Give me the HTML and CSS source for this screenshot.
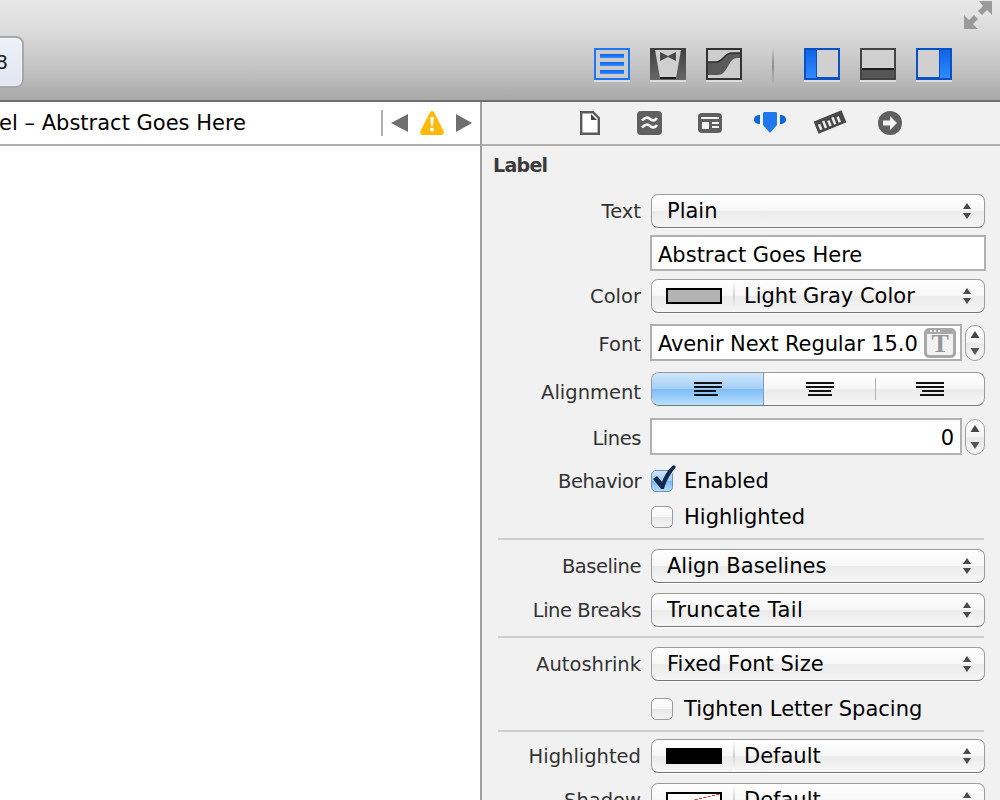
FILE: index.html
```html
<!DOCTYPE html>
<html lang="en">
<head>
<meta charset="utf-8">
<title>Label inspector</title>
<link rel="stylesheet" href="styles.css">
</head>
<body>
<svg class="defs" width="0" height="0" aria-hidden="true">
  <defs>
    <linearGradient id="blueFill" x1="0" y1="0" x2="0" y2="1"><stop offset="0" stop-color="#0f63e6"/><stop offset="1" stop-color="#2f8bff"/></linearGradient>
    <linearGradient id="darkFill" x1="0" y1="0" x2="0" y2="1"><stop offset="0" stop-color="#3f3f3f"/><stop offset="1" stop-color="#666"/></linearGradient>
    <symbol id="updown" viewBox="0 0 10 16"><path d="M5 0 9 6H1z" fill="#4a4a4a"/><path d="M1 10h8L5 16z" fill="#4a4a4a"/></symbol>
    <symbol id="stepup" viewBox="0 0 10 26"><path d="M5 1 9.500 8H.5z" fill="#444"/><path d="M.5 18h9L5 25z" fill="#555"/></symbol>
  </defs>
</svg>
<div class="app">
  <header class="toolbar">
    <div class="toolbar-top">
      <svg class="fullscreen" width="28" height="28" viewBox="0 0 28 28"><path d="M15 0H28V14L23 9 18 14 14 10 19 5Z" fill="#9a9a9a"/><path d="M0 14 5 19 10 14 14 18 9 23 14 28H0Z" fill="#9a9a9a"/></svg>
    </div>
    <div class="toolbar-main">
      <div class="run-button"><span>8</span></div>
      <div class="tool-group">
        <svg class="tool" width="36" height="34" viewBox="0 0 36 34"><rect y="32" width="36" height="2" fill="#dcdcdc"/><rect x="1" y="1" width="34" height="30" fill="#cbcbcb" stroke="#1b78f2" stroke-width="2"/><rect x="6" y="6" width="24" height="4" fill="url(#blueFill)"/><rect x="6" y="14" width="24" height="4" fill="url(#blueFill)"/><rect x="6" y="22" width="24" height="4" fill="url(#blueFill)"/></svg>
        <svg class="tool" width="36" height="34" viewBox="0 0 36 34"><rect y="32" width="36" height="2" fill="#dcdcdc"/><rect width="36" height="32" fill="url(#darkFill)"/><path d="M5 2H31L26 30H10Z" fill="#cfcfcf"/><path d="M10 4 18 8 26 4V13L18 9 10 13Z" fill="#4a4a4a"/><path d="M10 30H26" stroke="#1d1d1d" stroke-width="2"/></svg>
        <svg class="tool" width="36" height="34" viewBox="0 0 36 34"><rect y="32" width="36" height="2" fill="#dcdcdc"/><rect width="36" height="32" fill="#333"/><rect x="2" y="2" width="32" height="28" fill="#cdcdcd"/><path d="M2 14H10C17 14 18 5 26 5H34V10H31C22 10 22 27 12 27H2Z" fill="#5a5a5a"/><path d="M2 14H10C17 14 18 5 26 5H34" fill="none" stroke="#2c2c2c" stroke-width="1.500"/></svg>
      </div>
      <span class="tool-sep"></span>
      <div class="tool-group">
        <svg class="tool" width="36" height="34" viewBox="0 0 36 34"><rect y="32" width="36" height="2" fill="#dcdcdc"/><rect width="36" height="32" fill="#0b50c4"/><rect x="2" y="2" width="10" height="28" fill="url(#blueFill)"/><rect x="13" y="2" width="21" height="27" fill="#d0d0d0"/></svg>
        <svg class="tool" width="36" height="34" viewBox="0 0 36 34"><rect y="32" width="36" height="2" fill="#dcdcdc"/><rect width="36" height="32" fill="#444"/><rect x="2" y="2" width="32" height="18" fill="#d0d0d0"/><rect x="2" y="20" width="32" height="2" fill="#1c1c1c"/><rect x="2" y="22" width="32" height="8" fill="#555"/></svg>
        <svg class="tool" width="36" height="34" viewBox="0 0 36 34"><rect y="32" width="36" height="2" fill="#dcdcdc"/><rect width="36" height="32" fill="#0b50c4"/><rect x="24" y="2" width="10" height="28" fill="url(#blueFill)"/><rect x="2" y="2" width="21" height="27" fill="#d0d0d0"/></svg>
      </div>
    </div>
  </header>
  <div class="workspace">
    <section class="editor">
      <div class="jumpbar">
        <div class="crumb">Label – Abstract Goes Here</div>
        <span class="jump-sep"></span>
        <svg class="jump-icon" width="17" height="18" viewBox="0 0 17 18"><path d="M17 0V18L0 9Z" fill="#6f6f6f"/></svg>
        <svg class="jump-icon warn" width="24" height="24" viewBox="0 0 24 24"><path d="M12 0C13.500 0 14 1 15 3L23.500 20C24.500 22.500 23.500 24 21 24H3C.5 24-.5 22.500.5 20L9 3C10 1 10.500 0 12 0Z" fill="#ffb908"/><path d="M10.300 6H13.700L13 15H11Z" fill="#fff"/><circle cx="12" cy="18.500" r="1.900" fill="#fff"/></svg>
        <svg class="jump-icon next" width="16" height="18" viewBox="0 0 16 18"><path d="M0 0V18L16 9Z" fill="#6f6f6f"/></svg>
      </div>
    </section>
    <aside class="inspector">
      <nav class="tabs">
        <svg class="tab tab-doc" width="20" height="24" viewBox="0 0 20 24"><path d="M1.200 1.200H13L18.800 7V22.800H1.200Z" fill="#fff" stroke="#5a5a5a" stroke-width="2.400"/><path d="M11 3V9H17Z" fill="#444"/></svg>
        <svg class="tab tab-quick" width="25" height="24" viewBox="0 0 25 24"><rect width="25" height="24" rx="4" fill="#5f5f5f"/><path d="M5 9.500C8 6 11 6 13 8S18 10 20 7M5 16.500C8 13 11 13 13 15S18 17 20 14" fill="none" stroke="#f4f4f4" stroke-width="2.600"/></svg>
        <svg class="tab tab-layout" width="24" height="20" viewBox="0 0 24 20"><rect width="24" height="20" rx="4" fill="#5f5f5f"/><rect x="3" y="4" width="18" height="2" fill="#f4f4f4"/><rect x="4" y="9" width="7" height="7" fill="#f4f4f4"/><rect x="14" y="9" width="7" height="2" fill="#f4f4f4"/><rect x="14" y="13" width="7" height="2" fill="#f4f4f4"/></svg>
        <svg class="tab tab-shield" width="32" height="22" viewBox="0 0 32 22"><path d="M9 1C9 0 10 0 11 0H21C22 0 23 0 23 1V13L16 21 9 13Z" fill="#2078ee"/><path d="M6 3V12C2 12 0 10 0 7.500S2 3 6 3ZM26 3V12C30 12 32 10 32 7.500S30 3 26 3Z" fill="#0f66dc"/></svg>
        <svg class="tab tab-ruler" width="32" height="24" viewBox="0 0 32 24"><g transform="rotate(-22 16 12)"><rect x="1" y="5.500" width="30" height="13" fill="#484848"/><path d="M5 10V16M10 8.500V16M15 10V16M20 8.500V16M25 10V16" stroke="#ececec" stroke-width="2.500"/></g></svg>
        <svg class="tab tab-arrow" width="24" height="24" viewBox="0 0 24 24"><circle cx="12" cy="12" r="12" fill="#5f5f5f"/><path d="M5 9.500H12V5L19 12 12 19V14.500H5Z" fill="#f4f4f4"/></svg>
      </nav>
      <div class="panel">
        <h2 class="panel-title">Label</h2>
        <div class="row row-text">
          <label class="field-label">Text</label>
          <div class="select"><span class="select-value">Plain</span><svg class="updown" width="10" height="16"><use href="#updown"/></svg></div>
        </div>
        <div class="row row-gap7">
          <span class="field-label"></span>
          <div class="textfield textfield-full">Abstract Goes Here</div>
        </div>
        <div class="row row-gap8">
          <label class="field-label">Color</label>
          <div class="select"><span class="swatch swatch-gray"></span><span class="select-rule"></span><span class="select-value select-value-after">Light Gray Color</span><svg class="updown" width="10" height="16"><use href="#updown"/></svg></div>
        </div>
        <div class="row row-gap11">
          <label class="field-label label-lower">Font</label>
          <div class="textfield textfield-step textfield-font">Avenir Next Regular 15.0<span class="font-btn"><span class="font-btn-t">T</span></span></div>
          <div class="stepper"><svg width="10" height="26"><use href="#stepup"/></svg></div>
        </div>
        <div class="row row-gap11">
          <label class="field-label label-low">Alignment</label>
          <div class="segmented">
            <div class="seg seg-on"><svg width="28" height="14" viewBox="0 0 28 14"><path d="M0 0H28V2H0ZM0 4H28V6H0ZM0 8H22V10H0ZM0 12H24V14H0Z" fill="#111"/></svg></div>
            <div class="seg"><svg width="28" height="14" viewBox="0 0 28 14"><path d="M0 0H28V2H0ZM0 4H28V6H0ZM3 8H25V10H3ZM2 12H26V14H2Z" fill="#111"/></svg></div>
            <div class="seg seg-last"><svg width="28" height="14" viewBox="0 0 28 14"><path d="M0 0H28V2H0ZM0 4H28V6H0ZM6 8H28V10H6ZM4 12H28V14H4Z" fill="#111"/></svg></div>
          </div>
        </div>
        <div class="row row-gap12">
          <label class="field-label label-lower label-tight">Lines</label>
          <div class="textfield textfield-step textfield-num">0</div>
          <div class="stepper"><svg width="10" height="26"><use href="#stepup"/></svg></div>
        </div>
        <div class="row row-check row-enabled">
          <label class="field-label label-tight">Behavior</label>
          <span class="check check-on"><svg class="checkmark" width="26" height="28" viewBox="0 0 26 28"><path d="M2 17 6 14 11 20C14 12 18 6 23 3L25 5C20 11 15 19 13 27H10Z" fill="#10294f"/></svg></span>
          <span class="check-label">Enabled</span>
        </div>
        <div class="row row-check row-highlight">
          <span class="field-label"></span>
          <span class="check"></span>
          <span class="check-label">Highlighted</span>
        </div>
        <hr class="divider divider-a">
        <div class="row">
          <label class="field-label label-tight">Baseline</label>
          <div class="select"><span class="select-value">Align Baselines</span><svg class="updown" width="10" height="16"><use href="#updown"/></svg></div>
        </div>
        <div class="row row-gap10">
          <label class="field-label label-tight">Line Breaks</label>
          <div class="select"><span class="select-value select-value-wide">Truncate Tail</span><svg class="updown" width="10" height="16"><use href="#updown"/></svg></div>
        </div>
        <hr class="divider divider-b">
        <div class="row">
          <label class="field-label">Autoshrink</label>
          <div class="select"><span class="select-value">Fixed Font Size</span><svg class="updown" width="10" height="16"><use href="#updown"/></svg></div>
        </div>
        <div class="row row-check row-tighten">
          <span class="field-label"></span>
          <span class="check"></span>
          <span class="check-label">Tighten Letter Spacing</span>
        </div>
        <hr class="divider divider-c">
        <div class="row">
          <label class="field-label">Highlighted</label>
          <div class="select"><span class="swatch swatch-black"></span><span class="select-rule"></span><span class="select-value select-value-after">Default</span><svg class="updown" width="10" height="16"><use href="#updown"/></svg></div>
        </div>
        <div class="row row-gap10">
          <label class="field-label">Shadow</label>
          <div class="select"><span class="swatch swatch-none"></span><span class="select-rule"></span><span class="select-value select-value-after">Default</span><svg class="updown" width="10" height="16"><use href="#updown"/></svg></div>
        </div>
      </div>
    </aside>
  </div>
</div>
</body>
</html>
```
FILE: styles.css
```css
* { box-sizing: border-box; }
html, body { margin: 0; height: 100%; overflow: hidden; }
body { font-family: "DejaVu Sans", Verdana, sans-serif; font-size: 20px; color: #000; background: #fff; }
.defs { display: block; height: 0; }
.app { display: flex; flex-direction: column; width: 1000px; height: 800px; overflow: hidden; }

.toolbar { height: 102px; flex: none; border-bottom: 2px solid #6e6e6e; background: linear-gradient(#e8e8e8 0, #dcdcdc 30%, #c6c6c6 65%, #a9a9a9 100%); display: flex; flex-direction: column; overflow: hidden; }
.toolbar-top { height: 36px; flex: none; display: flex; justify-content: flex-end; padding: 1px 8px 0 0; }
.fullscreen { display: block; }
.toolbar-main { display: flex; align-items: flex-start; padding-left: 0; }
.run-button { width: 64px; height: 52px; margin-left: -40px; flex: none; border: 2px solid #a8a8a8; border-radius: 8px; background: linear-gradient(#eef1f8, #e2e6f0); display: flex; align-items: center; justify-content: flex-end; padding: 0 2px 0 0; box-shadow: inset 0 0 2px #fff; }
.run-button span { margin-right: 12px; color: #222; font-size: 20px; }
.tool-group { display: flex; gap: 20px; margin-top: 12px; }
.toolbar-main > .tool-group:nth-of-type(2) { margin-left: 570px; }
.tool { display: block; flex: none; }
.tool-sep { width: 2px; height: 38px; margin: 11px 30px 0 30px; background: linear-gradient(#bdbdbd00, #8c8c8c 50%, #bdbdbd00); }

.workspace { flex: 1; min-height: 0; display: flex; }
.editor { width: 480px; flex: none; background: #fff; }
.jumpbar { height: 44px; border-bottom: 2px solid #b0b0b0; display: flex; align-items: center; }
.crumb { width: 246px; flex: none; display: flex; justify-content: flex-end; overflow: hidden; white-space: nowrap; font-size: 21px; }
.jump-sep { width: 2px; height: 26px; margin-left: 135px; background: #b0b0b0; flex: none; }
.jump-icon { display: block; flex: none; margin-left: 8px; }
.warn { margin-left: 12px; }
.next { margin-left: 12px; }

.inspector { width: 520px; flex: none; border-left: 2px solid #a0a0a0; background: #f1f1f1; min-height: 0; overflow: hidden; }
.tabs { height: 44px; border-bottom: 2px solid #b0b0b0; display: flex; align-items: center; padding-left: 98px; }
.tab { display: block; flex: none; }
.tab-quick { margin-left: 37px; }
.tab-layout { margin-left: 36px; }
.tab-shield { margin-left: 32px; }
.tab-ruler { margin-left: 28px; margin-top: -2px; }
.tab-arrow { margin-left: 32px; }

.panel { padding: 7px 14px 0 16px; }
.panel-title { margin: 0 0 17px -5px; height: 24px; line-height: 24px; font-size: 19px; font-weight: bold; color: #3b3b3b; letter-spacing: -0.7px; }
.row { display: flex; align-items: center; }
.field-label { width: 143px; flex: none; margin-right: 10px; text-align: right; color: #333; white-space: nowrap; font-size: 19.5px; }
.label-low { padding-top: 7px; }
.label-lower { padding-top: 3px; }
.label-tight { letter-spacing: -0.45px; }
.row-gap7 { margin-top: 7px; }
.row-gap8 { margin-top: 8px; }
.row-gap10 { margin-top: 10px; }
.row-gap11 { margin-top: 11px; }
.row-gap12 { margin-top: 12px; }

.select { width: 334px; height: 34px; flex: none; display: flex; align-items: center; padding: 0 12px 0 15px; border-radius: 7px; border: 1px solid #9a9a9a; border-bottom-color: #777; background: linear-gradient(#ffffff 0, #f7f7f7 48%, #ebebeb 52%, #f6f6f6 100%); box-shadow: 0 1px 0 #fff; }
.select-value { flex: 1; white-space: nowrap; font-size: 21px; }
.select-value-after { margin-left: 9px; }
.select-value-wide { letter-spacing: 0.4px; }
.updown { display: block; flex: none; }
.swatch { display: block; flex: none; width: 56px; height: 16px; margin-left: -1px; border: 2px solid #000; }
.swatch-gray { background: #b3b3b3; }
.swatch-black { background: #000; }
.swatch-none { background: linear-gradient(to bottom right, #fff 48%, #e33 49%, #e33 51%, #fff 52%); }
.select-rule { width: 2px; height: 32px; margin-left: 11px; flex: none; background: linear-gradient(#ffffff, #d0d0d0, #ffffff); }

.textfield { height: 36px; flex: none; display: flex; align-items: center; padding: 3px 6px 0; border: 2px solid #b0b0b0; background: #fff; white-space: nowrap; font-size: 21px; }
.textfield-full { width: 336px; margin-left: -1px; }
.textfield-step { width: 312px; margin-left: -1px; height: 37px; padding-right: 4px; justify-content: space-between; }
.textfield-font { letter-spacing: -0.12px; }
.textfield-num { justify-content: flex-end; padding-right: 6px; }
.font-btn { width: 32px; height: 30px; margin-top: -3px; flex: none; position: relative; display: flex; align-items: center; justify-content: center; border: 3px solid #a8a8a8; border-top-width: 6px; border-radius: 5px; background: #f2f2f2; }
.font-btn::before { content: ""; position: absolute; left: 3px; top: -4px; width: 10px; height: 2px; background: repeating-linear-gradient(to right, #f2f2f2 0 2px, transparent 2px 4px); }
.font-btn-t { font-family: "Liberation Serif", serif; font-weight: bold; font-size: 26px; line-height: 1; color: #969696; }
.stepper { width: 20px; height: 36px; margin-left: 3px; flex: none; display: flex; align-items: center; justify-content: center; border: 1px solid #a0a0a0; border-radius: 10px; background: linear-gradient(#fff, #f4f4f4 50%, #e8e8e8 52%, #f6f6f6); }
.stepper svg { display: block; }

.segmented { width: 334px; height: 34px; flex: none; display: flex; border: 1px solid #9a9a9a; border-bottom-color: #777; border-radius: 8px; overflow: hidden; background: linear-gradient(#ffffff 0, #f7f7f7 48%, #ebebeb 52%, #f6f6f6 100%); }
.seg { width: 111px; flex: none; display: flex; align-items: center; justify-content: center; position: relative; }
.seg-on { width: 112px; background: linear-gradient(#d0e6fb 0, #a6d0f6 48%, #7fbdf8 52%, #b8e0ff 100%); border-right: 1px solid #7d9cc4; }
.seg-last { width: 109px; }
.seg-last::before { content: ""; position: absolute; left: 0; top: 5px; bottom: 5px; width: 1px; background: #b4b4b4; }

.row-check { height: 22px; }
.row-enabled { margin-top: 15px; }
.row-highlight { margin-top: 14px; }
.row-tighten { margin-top: 17px; }
.check { width: 22px; height: 22px; flex: none; position: relative; border: 1px solid #9e9e9e; border-radius: 5px; background: linear-gradient(#fff, #f6f6f6 48%, #e8e8e8 52%, #f4f4f4); }
.check-on { background: linear-gradient(#cfe4fa, #a2cdf5 48%, #7cbaf5 52%, #b4dcfd); border-color: #6f8fb8; }
.checkmark { position: absolute; left: -1px; top: -9px; display: block; }
.check-label { margin-left: 11px; white-space: nowrap; font-size: 21px; }
.divider { height: 2px; margin: 0; border: 0; background: #cdcdcd; }
.divider-a { margin: 10px 0 9px; width: 486px; }
.divider-b { margin: 9px 0 9px; width: 486px; }
.divider-c { margin: 10px 0 7px; width: 486px; }
```
